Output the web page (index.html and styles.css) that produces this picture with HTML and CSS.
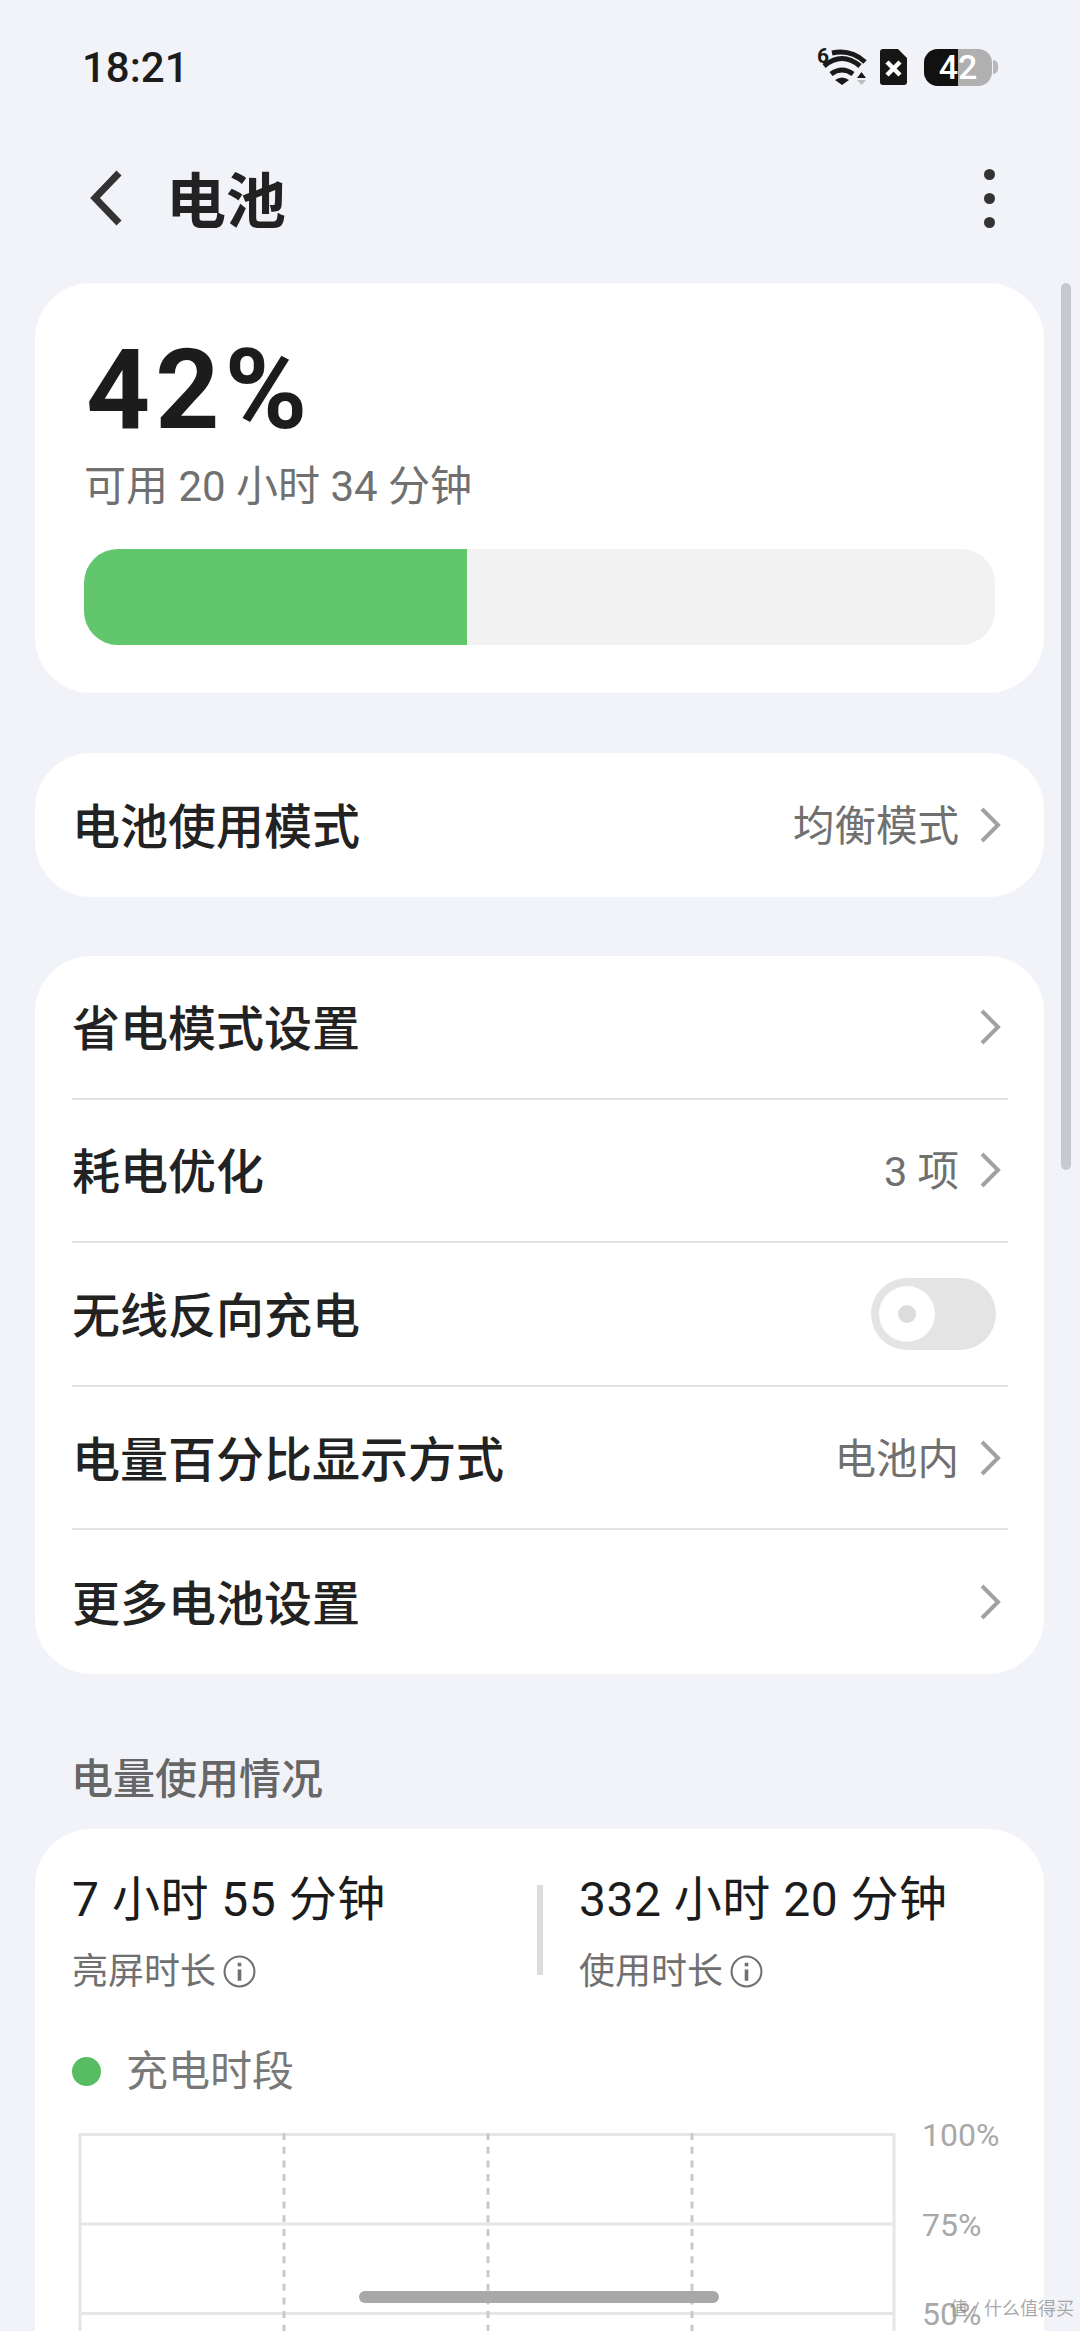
FILE: index.html
```html
<!DOCTYPE html>
<html lang="zh-CN">
<head>
  <meta charset="UTF-8" />
  <meta name="viewport" content="width=device-width, initial-scale=1.0"/>
  <title>电池</title>
  <link rel="stylesheet" href="styles.css">
</head>
<body>
<div class="status-bar">
  <span class="time">18:21</span>
  <div class="status-icons">
    <svg class="wifi-icon" width="50" height="40" viewBox="0 0 50 40">
      <text class="wifi-six" x="0" y="16">6</text>
      <g fill="none" stroke="#1a1a1a" stroke-width="5">
        <path d="M15 6 Q34 2 48 15"/>
        <path d="M7 19 Q25 4 43 19"/>
        <path d="M14 27 Q25 19 36 27"/>
      </g>
      <path d="M18 33 Q25 28 32 33 L25 38 Z" fill="#1a1a1a"/>
      <path d="M40 31 L44.500 25 L49 31 Z" fill="#1a1a1a"/>
      <path d="M40 33 L44.500 38 L49 33 Z" fill="#bdbdbd"/>
    </svg>
    <svg class="sim-icon" width="27" height="36" viewBox="0 0 27 36">
      <path d="M3 0 H18 L27 9 V33 Q27 36 24 36 H3 Q0 36 0 33 V3 Q0 0 3 0 Z" fill="#161616"/>
      <path d="M7 13 L20 26 M20 13 L7 26" stroke="#fff" stroke-width="4.500"/>
    </svg>
    <div class="battery">
      <div class="battery-body">
        <div class="battery-level"></div>
        <span class="battery-text">42</span>
      </div>
      <div class="battery-nub"></div>
    </div>
  </div>
</div>

<div class="nav-bar">
  <svg class="back-icon" width="34" height="58" viewBox="0 0 34 58">
    <path d="M30 4 L6 29 L30 54" fill="none" stroke="#333" stroke-width="7"/>
  </svg>
  <h1>电池</h1>
  <div class="more-btn"><i></i><i></i><i></i></div>
</div>

<div class="card battery-card">
  <div class="percent">42%</div>
  <div class="remain">可用 20 小时 34 分钟</div>
  <div class="level-track"><div class="level-fill"></div></div>
</div>

<div class="card list-card">
  <div class="row single">
    <span class="row-title">电池使用模式</span>
    <span class="row-value">均衡模式</span>
    <svg class="chevron" viewBox="0 0 22 38"><path d="M3 3 L19 19 L3 35"/></svg>
  </div>
</div>

<div class="card list-card">
  <div class="row">
    <span class="row-title">省电模式设置</span>
    <svg class="chevron" viewBox="0 0 22 38"><path d="M3 3 L19 19 L3 35"/></svg>
  </div>
  <div class="row">
    <span class="row-title">耗电优化</span>
    <span class="row-value">3 项</span>
    <svg class="chevron" viewBox="0 0 22 38"><path d="M3 3 L19 19 L3 35"/></svg>
  </div>
  <div class="row">
    <span class="row-title">无线反向充电</span>
    <div class="switch"><div class="switch-knob"><i></i></div></div>
  </div>
  <div class="row">
    <span class="row-title">电量百分比显示方式</span>
    <span class="row-value">电池内</span>
    <svg class="chevron" viewBox="0 0 22 38"><path d="M3 3 L19 19 L3 35"/></svg>
  </div>
  <div class="row">
    <span class="row-title">更多电池设置</span>
    <svg class="chevron" viewBox="0 0 22 38"><path d="M3 3 L19 19 L3 35"/></svg>
  </div>
</div>

<h2 class="section-title">电量使用情况</h2>

<div class="card usage-card">
  <div class="stats">
    <div class="stat stat-first">
      <div class="stat-value">7 小时 55 分钟</div>
      <div class="stat-label">亮屏时长
        <svg class="info-icon" viewBox="0 0 32 32"><circle cx="16" cy="16" r="14.500"/><path d="M16 14 V25"/><path d="M16 7.500 V11"/></svg>
      </div>
    </div>
    <div class="stat-divider"></div>
    <div class="stat">
      <div class="stat-value">332 小时 20 分钟</div>
      <div class="stat-label">使用时长
        <svg class="info-icon" viewBox="0 0 32 32"><circle cx="16" cy="16" r="14.500"/><path d="M16 14 V25"/><path d="M16 7.500 V11"/></svg>
      </div>
    </div>
  </div>

  <div class="legend"><span class="legend-dot"></span>充电时段</div>

  <div class="chart-row">
    <svg class="chart" width="818" height="230" viewBox="0 0 818 230">
      <g stroke="#e6e6e6" stroke-width="3" fill="none">
        <path d="M2 230 V1.500 H816 V230"/>
        <path d="M2 91 H816"/>
        <path d="M2 180.500 H816"/>
      </g>
      <g stroke="#c9c9c9" stroke-width="3" stroke-dasharray="7 6.700">
        <path d="M206 0 V230"/>
        <path d="M410 0 V230"/>
        <path d="M614 0 V230"/>
      </g>
    </svg>
    <div class="chart-labels">
      <span>100%</span>
      <span>75%</span>
      <span>50%</span>
    </div>
  </div>
</div>

<div class="scroll-bar"></div>
<div class="home-bar"></div>
<div class="watermark">值 / 什么值得买</div>
</body>
</html>
```

FILE: styles.css
```css
* {
  box-sizing: border-box;
}
html, body {
  margin: 0;
  padding: 0;
}
body {
  position: relative;
  width: 1080px;
  height: 2331px;
  overflow: hidden;
  font-family: Roboto, "Noto Sans CJK SC", sans-serif;
  background: #f1f3f8;
  color: #222;
}
.status-bar {
  height: 134px;
  padding: 0 82px;
  display: flex;
  justify-content: space-between;
  align-items: center;
}
.time {
  font-size: 42px;
  font-weight: 500;
  color: #1c1c1c;
}
.status-icons {
  display: flex;
  align-items: center;
}
.wifi-icon {
  margin-right: 13px;
  overflow: visible;
}
.wifi-six {
  font-size: 21px;
  font-weight: 700;
  fill: #1a1a1a;
}
.sim-icon {
  margin-right: 17px;
}
.battery {
  display: flex;
  align-items: center;
  gap: 1px;
}
.battery-body {
  position: relative;
  width: 68px;
  height: 37px;
  background: #b0b0b0;
  border-radius: 14px;
  overflow: hidden;
  display: flex;
  align-items: center;
  justify-content: center;
}
.battery-level {
  position: absolute;
  left: 0;
  top: 0;
  bottom: 0;
  width: 34px;
  background: #111;
}
.battery-text {
  position: relative;
  font-size: 34px;
  font-weight: 500;
  color: #fff;
}
.battery-nub {
  width: 5px;
  height: 14px;
  background: #b8b8b8;
  border-radius: 0 5px 5px 0;
}
.nav-bar {
  height: 128px;
  margin-bottom: 21px;
  padding: 0 85px 0 89px;
  display: flex;
  align-items: center;
}
.back-icon {
  margin-right: 49px;
}
.nav-bar h1 {
  flex: 1;
  margin: -4px 0 0 -6px;
  font-size: 60px;
  font-weight: 700;
  color: #222;
}
.more-btn {
  display: flex;
  flex-direction: column;
  gap: 13px;
}
.more-btn i {
  width: 11px;
  height: 11px;
  border-radius: 50%;
  background: #333;
}
.card {
  margin: 0 36px 59px 35px;
  background: #fff;
  border-radius: 56px;
}
.battery-card {
  margin-bottom: 60px;
  padding: 47px 49px 48px 49px;
}
.percent {
  margin-left: 2px;
  font-size: 112px;
  line-height: 120px;
  font-weight: 700;
  letter-spacing: 5px;
  color: #1c1c1c;
}
.remain {
  margin-top: 12px;
  font-size: 42px;
  line-height: 50px;
  color: #707070;
}
.level-track {
  margin-top: 37px;
  height: 96px;
  border-radius: 34px;
  background: #f2f2f2;
  overflow: hidden;
}
.level-fill {
  width: 42%;
  height: 100%;
  background: #62c66d;
}
.list-card {
  padding: 0 36px 0 37px;
}
.row {
  height: 143.600px;
  display: flex;
  align-items: center;
  border-bottom: 2px solid #e2e2e2;
}
.row:last-child {
  border-bottom: none;
}
.row.single {
  height: 144px;
}
.row-title {
  flex: 1;
  padding-bottom: 4px;
  font-size: 48px;
  font-weight: 500;
  color: #222;
}
.row-value {
  margin-right: 20px;
  padding-bottom: 4px;
  font-size: 41.500px;
  color: #707070;
}
.chevron {
  width: 22px;
  height: 38px;
  margin-right: 7px;
  fill: none;
  stroke: #a2a2a2;
  stroke-width: 4;
}
.switch {
  width: 125px;
  height: 72px;
  margin-right: 12px;
  padding: 8px;
  border-radius: 36px;
  background: #e4e4e4;
}
.switch-knob {
  width: 56px;
  height: 56px;
  border-radius: 50%;
  background: #fff;
  display: flex;
  align-items: center;
  justify-content: center;
}
.switch-knob i {
  width: 18px;
  height: 18px;
  border-radius: 50%;
  background: #dcdcdc;
}
.section-title {
  margin: 81px 0 24px 71px;
  font-size: 42px;
  line-height: 50px;
  font-weight: 500;
  color: #666;
}
.usage-card {
  margin-bottom: 0;
  padding: 41px 37px 0;
  height: 600px;
}
.stats {
  display: flex;
}
.stat-first {
  width: 465px;
}
.stat-divider {
  width: 6px;
  height: 90px;
  margin: 15px 36px 0 0;
  background: #dcdcdc;
}
.stat-value {
  font-size: 48px;
  line-height: 60px;
  letter-spacing: 0.500px;
  color: #1c1c1c;
}
.stat-label {
  margin-top: 20px;
  display: flex;
  align-items: center;
  gap: 7px;
  font-size: 36px;
  line-height: 44px;
  color: #707070;
}
.info-icon {
  width: 33px;
  height: 33px;
  fill: none;
  stroke: #707070;
  stroke-width: 2;
}
.info-icon path {
  stroke-width: 3.500;
}
.legend {
  margin-top: 53px;
  display: flex;
  align-items: center;
  gap: 25px;
  font-size: 42px;
  line-height: 50px;
  color: #787878;
}
.legend-dot {
  width: 29px;
  height: 29px;
  border-radius: 50%;
  background: #58bd62;
}
.chart-row {
  margin: 18.500px 0 0 6px;
  display: flex;
  align-items: flex-start;
}
.chart {
  margin-top: 18px;
  flex-shrink: 0;
}
.chart-labels {
  margin-left: 26px;
  display: flex;
  flex-direction: column;
}
.chart-labels span {
  height: 89.500px;
  font-size: 32px;
  line-height: 40px;
  color: #a8a8a8;
}
.scroll-bar {
  position: absolute;
  left: 1061px;
  top: 283px;
  width: 10px;
  height: 887px;
  border-radius: 5px;
  background: #c8c9cf;
}
.home-bar {
  position: absolute;
  left: 359px;
  top: 2291px;
  width: 360px;
  height: 12px;
  border-radius: 6px;
  background: #a8a8a8;
}
.watermark {
  position: absolute;
  right: 6px;
  top: 2298px;
  font-size: 18px;
  line-height: 22px;
  color: rgba(140, 140, 140, 0.75);
}
```
